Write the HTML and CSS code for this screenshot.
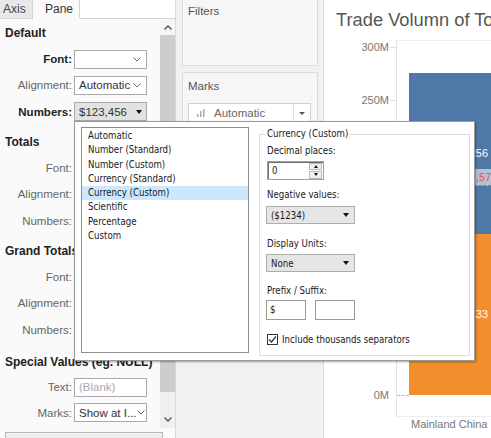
FILE: index.html
```html
<!DOCTYPE html>
<html>
<head>
<meta charset="utf-8">
<title>Format Pane</title>
<link rel="stylesheet" href="styles.css">
</head>
<body>
<div class="app">
  <aside class="format-pane">
    <div class="tabs">
      <div class="tab">Axis</div>
      <div class="tab tab-active">Pane</div>
      <div class="tab-fill"></div>
    </div>
    <div class="pane-scroll">
      <div class="pane-content">
        <div class="section">
          <div class="sec-title">Default</div>
          <div class="row"><span class="lbl strong">Font:</span><div class="dd"><span></span><svg class="chev" width="8" height="5" viewBox="0 0 8 5"><polyline points="0.5,0.5 4,4 7.5,0.5"/></svg></div></div>
          <div class="row"><span class="lbl">Alignment:</span><div class="dd"><span>Automatic</span><svg class="chev" width="8" height="5" viewBox="0 0 8 5"><polyline points="0.5,0.5 4,4 7.5,0.5"/></svg></div></div>
          <div class="row"><span class="lbl strong">Numbers:</span><div class="dd dd-active"><span>$123,456</span><i class="tri"></i></div></div>
        </div>
        <div class="section">
          <div class="sec-title">Totals</div>
          <div class="row"><span class="lbl">Font:</span><div class="dd"></div></div>
          <div class="row"><span class="lbl">Alignment:</span><div class="dd"></div></div>
          <div class="row"><span class="lbl">Numbers:</span><div class="dd"></div></div>
        </div>
        <div class="section">
          <div class="sec-title">Grand Totals</div>
          <div class="row"><span class="lbl">Font:</span><div class="dd"></div></div>
          <div class="row"><span class="lbl">Alignment:</span><div class="dd"></div></div>
          <div class="row"><span class="lbl">Numbers:</span><div class="dd"></div></div>
        </div>
        <div class="section section-special">
          <div class="sec-title">Special Values (eg. NULL)</div>
          <div class="row"><span class="lbl">Text:</span><div class="dd"><span class="placeholder">(Blank)</span></div></div>
          <div class="row"><span class="lbl">Marks:</span><div class="dd"><span>Show at I...</span><svg class="chev" width="8" height="5" viewBox="0 0 8 5"><polyline points="0.5,0.5 4,4 7.5,0.5"/></svg></div></div>
        </div>
      </div>
      <div class="scrollbar">
        <div class="sb-btn"><svg width="8" height="5" viewBox="0 0 8 5"><polyline points="0.5,4.5 4,1 7.5,4.5"/></svg></div>
        <div class="sb-thumb"></div>
        <div class="sb-track"></div>
        <div class="sb-btn sb-down"><svg width="8" height="5" viewBox="0 0 8 5"><polyline points="0.5,0.5 4,4 7.5,0.5"/></svg></div>
      </div>
    </div>
    <div class="pane-footer"><div class="footer-btn"></div></div>
  </aside>

  <section class="shelves">
    <div class="card card-filters"><div class="card-title">Filters</div></div>
    <div class="card card-marks">
      <div class="card-title">Marks</div>
      <div class="marks-dd">
        <svg class="marks-icon" width="8" height="8" viewBox="0 0 8 8"><rect x="0" y="5" width="1.5" height="3"/><rect x="3" y="2" width="1.5" height="6"/><rect x="6" y="0" width="1.5" height="8"/></svg>
        <span class="marks-text">Automatic</span>
        <span class="marks-sep"></span>
        <i class="tri tri-gray"></i>
      </div>
    </div>
  </section>

  <main class="chart">
    <div class="chart-title">Trade Volumn of Top Countries</div>
    <div class="grid-top"></div>
    <div class="axis-line"></div>
    <div class="grid-bottom"></div>
    <div class="tick-label t300">300M</div>
    <div class="tick-label t250">250M</div>
    <div class="tick-label t0">0M</div>
    <div class="tick t300m"></div>
    <div class="tick t250m"></div>
    <div class="bar bar-blue"></div>
    <div class="bar bar-orange"></div>
    <div class="zero-line"></div>
    <div class="bar-label bl-blue">271,368,256</div>
    <div class="bar-hl"><span>,578</span></div>
    <div class="bar-label bl-orange">183,905,133</div>
    <div class="cat-label">Mainland China</div>
  </main>
</div>

<div class="popup">
  <div class="listbox">
    <div class="li">Automatic</div>
    <div class="li">Number (Standard)</div>
    <div class="li">Number (Custom)</div>
    <div class="li">Currency (Standard)</div>
    <div class="li li-sel">Currency (Custom)</div>
    <div class="li">Scientific</div>
    <div class="li">Percentage</div>
    <div class="li">Custom</div>
  </div>
  <fieldset class="group">
    <legend>Currency (Custom)</legend>
    <div class="f-label fl-1">Decimal places:</div>
    <div class="spin">
      <span class="spin-val">0</span>
      <div class="spin-btns">
        <div class="spin-btn"><i class="tri-up"></i></div>
        <div class="spin-btn"><i class="tri-dn"></i></div>
      </div>
    </div>
    <div class="f-label fl-2">Negative values:</div>
    <div class="combo"><span>($1234)</span><i class="tri"></i></div>
    <div class="f-label fl-3">Display Units:</div>
    <div class="combo"><span>None</span><i class="tri"></i></div>
    <div class="f-label fl-4">Prefix / Suffix:</div>
    <div class="affix-row">
      <div class="tb">$</div>
      <div class="tb"></div>
    </div>
    <div class="check-row">
      <span class="cb"><svg width="9" height="9" viewBox="0 0 9 9"><polyline points="1,4.5 3.5,7 8,1.5"/></svg></span>
      <span>Include thousands separators</span>
    </div>
  </fieldset>
</div>
</body>
</html>
```

FILE: styles.css
```css
* { box-sizing: border-box; }
html, body {
  margin: 0;
  width: 491px;
  height: 438px;
  overflow: hidden;
  background: #fff;
}
body {
  position: relative;
  font-family: "Liberation Sans", Arial, sans-serif;
}
.app {
  display: flex;
  height: 438px;
}

/* ---------- format pane ---------- */
.format-pane {
  width: 176px;
  flex: none;
  display: flex;
  flex-direction: column;
  background: #fafafa;
  border-right: 1px solid #d9d9d9;
}
.tabs {
  display: flex;
  height: 19px;
  flex: none;
}
.tab {
  width: 33px;
  height: 19px;
  padding-left: 3px;
  font-size: 12px;
  line-height: 18px;
  color: #444;
  background: #e8e8e8;
  border-bottom: 1px solid #d4d4d4;
  border-right: 1px solid #d4d4d4;
}
.tab-active {
  width: 47px;
  padding-left: 12px;
  color: #333;
  background: #fafafa;
  border-bottom-color: transparent;
}
.tab-fill {
  flex: 1;
  background: #fff;
  border-bottom: 1px solid #d4d4d4;
}
.pane-scroll {
  display: flex;
  height: 409px;
  flex: none;
}
.pane-content {
  width: 160px;
  padding-top: 1px;
  overflow: hidden;
}
.section + .section { margin-top: 4px; }
.section-special { margin-top: 6px !important; }
.sec-title {
  height: 26px;
  line-height: 26px;
  padding-left: 5px;
  font-size: 12px;
  font-weight: bold;
  color: #222;
  white-space: nowrap;
}
.row {
  display: grid;
  grid-template-columns: 72px 73px;
  column-gap: 2px;
  align-items: center;
  height: 26.3px;
}
.section-special .row { height: 25.5px; }
.lbl {
  text-align: right;
  font-size: 11.5px;
  color: #666;
}
.lbl.strong { color: #222; font-weight: bold; }
.dd {
  height: 19px;
  display: flex;
  align-items: center;
  justify-content: space-between;
  padding: 0 5px 0 4px;
  background: #fff;
  border: 1px solid #a9a9a9;
  font-size: 11.5px;
  color: #333;
  white-space: nowrap;
}
.dd-active { background: #e2e2e2; padding-right: 4px; }
.placeholder { color: #aaa; }
.chev { fill: none; stroke: #666; stroke-width: 1; flex: none; }
.tri {
  display: inline-block;
  width: 0;
  height: 0;
  border-left: 3.5px solid transparent;
  border-right: 3.5px solid transparent;
  border-top: 4px solid #111;
}
.tri-gray { border-top-color: #555; }

.scrollbar {
  width: 15px;
  display: flex;
  flex-direction: column;
  background: #f0f0f0;
}
.sb-btn {
  height: 16px;
  display: flex;
  align-items: center;
  justify-content: center;
  background: #f5f5f5;
}
.sb-btn svg { fill: none; stroke: #555; stroke-width: 1.4; }
.sb-down { height: 17px; background: #f0f0f0; }
.sb-thumb { height: 357px; background: #cdcdcd; }
.sb-track { flex: 1; }
.pane-footer { flex: 1; padding: 4px 0 0 5px; }
.footer-btn {
  width: 158px;
  height: 20px;
  border: 1px solid #b8b8b8;
  background: #efefef;
}

/* ---------- shelves ---------- */
.shelves {
  width: 148px;
  flex: none;
  padding: 0 5px 0 6px;
  background: #f1f1f1;
  border-right: 1px solid #dcdcdc;
}
.card {
  border: 1px solid #dcdcdc;
  background: #f6f6f6;
  padding: 4px 6px 0 5px;
}
.card-filters { margin-top: -1px; height: 67px; }
.card-marks { margin-top: 6px; height: 260px; padding-top: 6px; }
.card-title {
  font-size: 11.5px;
  line-height: 14px;
  color: #555;
}
.marks-dd {
  margin-top: 10px;
  height: 20px;
  display: flex;
  align-items: center;
  background: #fff;
  border: 1px solid #d2d2d2;
  padding-left: 8px;
}
.marks-icon { fill: #aaa; flex: none; }
.marks-text {
  margin-left: 9px;
  font-size: 11.5px;
  color: #666;
  flex: 1;
}
.marks-sep {
  width: 1px;
  height: 18px;
  background: #e0e0e0;
  margin-right: 5px;
}
.marks-dd .tri { margin-right: 5px; border-left-width: 3px; border-right-width: 3px; border-top-width: 3.5px; }

/* ---------- chart ---------- */
.chart {
  flex: 1;
  position: relative;
  overflow: hidden;
  background: #fff;
}
.chart-title {
  padding: 9px 0 0 12px;
  font-size: 18.3px;
  line-height: 22px;
  color: #555;
  white-space: nowrap;
}
.grid-top, .grid-bottom {
  position: absolute;
  left: 72px;
  right: 0;
  height: 1px;
  background: #ededed;
}
.grid-top { top: 40px; }
.grid-bottom { top: 416px; }
.axis-line {
  position: absolute;
  left: 72px;
  top: 40px;
  width: 1px;
  height: 377px;
  background: #e3e3e3;
}
.tick-label {
  position: absolute;
  left: 5px;
  width: 60px;
  text-align: right;
  font-size: 11px;
  line-height: 13px;
  color: #777;
}
.t300 { top: 41px; }
.t250 { top: 94px; }
.t0 { top: 389px; }
.tick {
  position: absolute;
  left: 66px;
  width: 6px;
  height: 1px;
  background: #e0e0e0;
}
.t300m { top: 47px; }
.t250m { top: 100px; }
.bar {
  position: absolute;
  left: 85px;
  right: 0;
}
.bar-blue { top: 73px; height: 161px; background: #4e79a7; }
.bar-orange { top: 234px; height: 161px; background: #f28e2b; }
.zero-line {
  position: absolute;
  left: 73px;
  top: 395px;
  width: 12px;
  border-top: 1px dashed #b5b5b5;
}
.bar-label {
  position: absolute;
  right: 3px;
  font-size: 11px;
  line-height: 13px;
  color: #fff;
  white-space: nowrap;
}
.bl-blue { top: 147px; }
.bl-orange { top: 308px; }
.bar-hl {
  position: absolute;
  left: 150px;
  right: 0;
  top: 169px;
  height: 17px;
  background: #b4c1d3;
  border-bottom: 1px dashed #e15759;
  overflow: hidden;
  font-size: 11px;
  line-height: 16px;
  color: #e15759;
  padding-left: 2px;
  white-space: nowrap;
}
.cat-label {
  position: absolute;
  left: 87px;
  top: 418px;
  font-size: 11px;
  line-height: 13px;
  color: #777;
  white-space: nowrap;
}

/* ---------- popup ---------- */
.popup {
  position: absolute;
  left: 74px;
  top: 121px;
  width: 401px;
  height: 240px;
  display: flex;
  align-items: flex-start;
  gap: 10px;
  padding: 5px 0 0 6px;
  background: #fff;
  border: 1px solid #9a9a9a;
  box-shadow: 1px 1px 2px rgba(0, 0, 0, 0.35);
  font-family: "DejaVu Sans Condensed", "DejaVu Sans", sans-serif;
  font-stretch: condensed;
  font-size: 9.6px;
  color: #1a1a1a;
}
.listbox {
  width: 168px;
  height: 226px;
  flex: none;
  border: 1px solid #8c8c8c;
  padding-top: 1px;
}
.li {
  height: 14.3px;
  line-height: 14.3px;
  padding-left: 6px;
  white-space: nowrap;
}
.li-sel { background: #cce8ff; }
.group {
  width: 211px;
  flex: none;
  margin: 1px 0 0 0;
  padding: 0 6px 10px 6px;
  border: 1px solid #dcdcdc;
  min-width: 0;
}
.group legend {
  padding: 0 1px;
  line-height: 12px;
  color: #222;
}
.f-label {
  line-height: 12px;
  padding-left: 1px;
  white-space: nowrap;
}
.fl-1 { margin-top: 5px; }
.fl-2 { margin-top: 9px; }
.fl-3 { margin-top: 14px; }
.fl-4 { margin-top: 13px; }
.spin {
  margin: 4px 0 0 1px;
  width: 57px;
  height: 19px;
  display: flex;
  align-items: center;
  justify-content: space-between;
  border: 1px solid #a0a0a0;
  box-shadow: inset 1px 1px 0 #6e6e6e;
  padding: 0 1px 0 4px;
}
.spin-btns {
  display: flex;
  flex-direction: column;
  gap: 1px;
}
.spin-btn {
  width: 13px;
  height: 7.5px;
  display: flex;
  align-items: center;
  justify-content: center;
  background: #f0f0f0;
  border: 1px solid #b9b9b9;
}
.tri-up, .tri-dn {
  display: block;
  width: 0;
  height: 0;
  border-left: 2.5px solid transparent;
  border-right: 2.5px solid transparent;
}
.tri-up { border-bottom: 3px solid #111; }
.tri-dn { border-top: 3px solid #111; }
.combo {
  margin-top: 5px;
  width: 89px;
  height: 18px;
  display: flex;
  align-items: center;
  justify-content: space-between;
  padding: 0 5px 0 4px;
  background: #e5e5e5;
  border: 1px solid #adadad;
}
.fl-3 + .combo { margin-top: 4px; }
.affix-row {
  margin-top: 3px;
  display: flex;
  gap: 9px;
}
.tb {
  width: 40px;
  height: 20px;
  line-height: 18px;
  padding-left: 3px;
  border: 1px solid #9a9a9a;
}
.check-row {
  margin-top: 13px;
  height: 12px;
  display: flex;
  align-items: center;
  gap: 4px;
  padding-left: 1px;
  white-space: nowrap;
}
.cb {
  width: 11px;
  height: 11px;
  flex: none;
  display: flex;
  align-items: center;
  justify-content: center;
  border: 1px solid #333;
  background: #fff;
}
.cb svg { fill: none; stroke: #333; stroke-width: 1.2; }
```
